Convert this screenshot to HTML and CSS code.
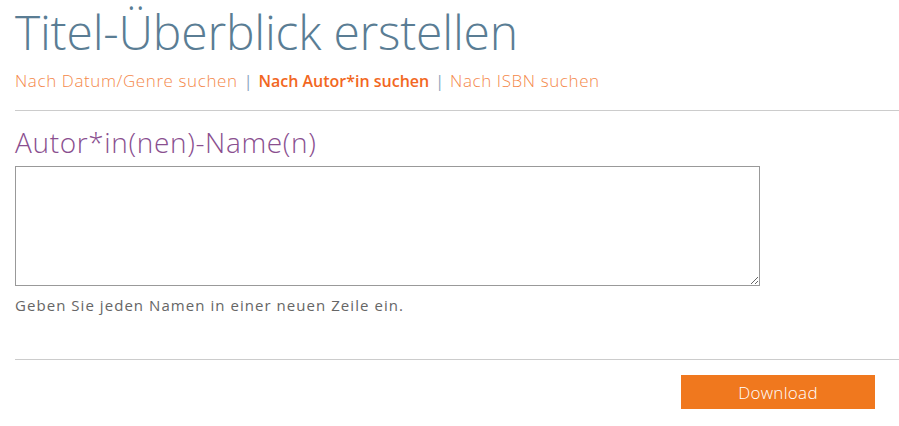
FILE: index.html
```html
<!DOCTYPE html>
<html lang="de">
<head>
    <meta charset="UTF-8">
    <meta name="viewport" content="width=device-width, initial-scale=1.0">
    <title>Titel-Überblick erstellen</title>
    <link rel="stylesheet" href="styles.css">
</head>
<body>
    <div class="page">
        <h1 class="page-title">Titel-Überblick erstellen</h1>
        <nav class="search-tabs">
            <a href="#" class="tab">Nach Datum/Genre suchen</a>
            <span class="sep">|</span>
            <a href="#" class="tab active">Nach Autor*in suchen</a>
            <span class="sep">|</span>
            <a href="#" class="tab">Nach ISBN suchen</a>
        </nav>
        <hr class="rule">
        <form class="author-form">
            <label for="authors" class="field-label">Autor*in(nen)-Name(n)</label>
            <textarea id="authors" class="names"></textarea>
            <p class="hint">Geben Sie jeden Namen in einer neuen Zeile ein.</p>
            <hr class="rule rule-bottom">
            <div class="actions">
                <button type="button" class="download">Download</button>
            </div>
        </form>
    </div>
</body>
</html>
```

FILE: styles.css
```css
body {
    margin: 0;
    font-family: "Open Sans", "Lato", sans-serif;
    background-color: white;
    color: #666;
}
.page {
    padding: 0 0 0 15px;
}
.page-title {
    margin: 0;
    padding-top: 4px;
    font-size: 48px;
    font-weight: 300;
    line-height: 56px;
    letter-spacing: -0.2px;
    color: #5a7d94;
}
.search-tabs {
    display: flex;
    align-items: baseline;
    gap: 6px;
    margin-top: 11px;
    font-size: 17px;
    line-height: 20px;
}
.tab {
    color: #f4884a;
    text-decoration: none;
    font-weight: 300;
    letter-spacing: 0.6px;
}
.tab.active {
    color: #f26722;
    font-size: 16px;
    font-weight: 600;
    letter-spacing: 0;
}
.sep {
    color: #8aa4c0;
    font-size: 16px;
}
.rule {
    border: none;
    border-top: 1px solid #ccc;
    margin: 19px 0 0;
}
.author-form {
    display: flex;
    flex-direction: column;
}
.field-label {
    margin-top: 14px;
    font-size: 28px;
    font-weight: 300;
    line-height: 34px;
    letter-spacing: 0.65px;
    color: #8a4f8f;
}
.names {
    box-sizing: border-box;
    width: 745px;
    height: 120px;
    margin-top: 7px;
    border: 1px solid #999;
    border-radius: 0;
}
.hint {
    margin: 9px 0 0;
    font-size: 15px;
    line-height: 20px;
    letter-spacing: 1.05px;
    color: #666;
}
.rule-bottom {
    margin-top: 44px;
}
.actions {
    display: flex;
    justify-content: flex-end;
    padding: 15px 24px 0 0;
}
.download {
    width: 194px;
    height: 34px;
    border: none;
    border-radius: 0;
    background-color: #f0781e;
    color: white;
    font-family: inherit;
    font-size: 17px;
    font-weight: 300;
    letter-spacing: 0.3px;
    cursor: pointer;
}
```
